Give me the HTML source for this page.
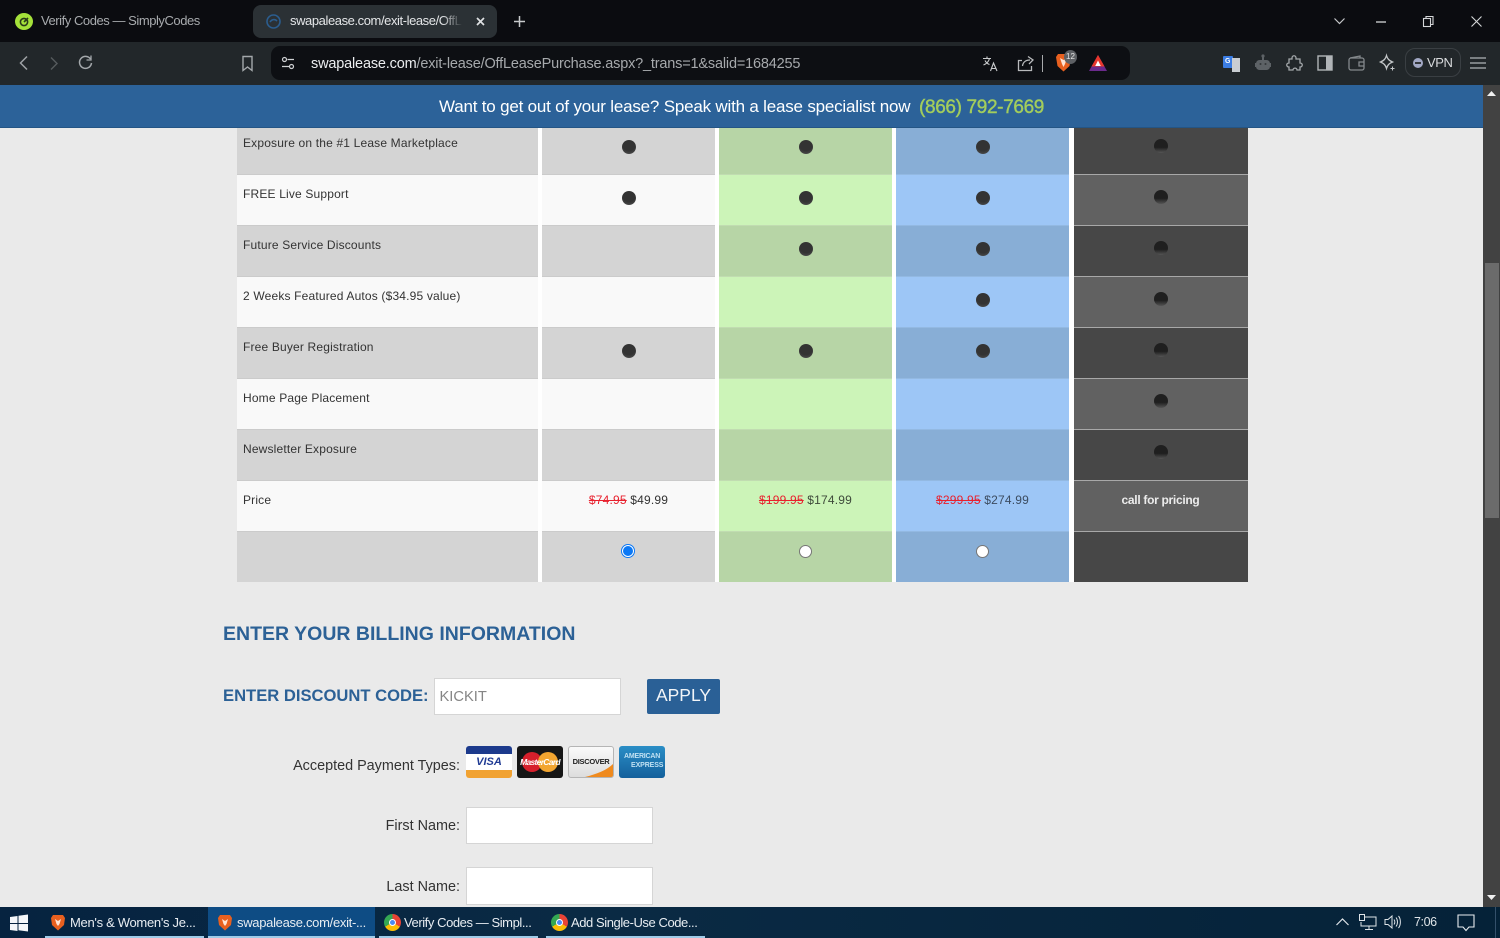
<!DOCTYPE html>
<html><head><meta charset="utf-8"><title>swapalease.com</title>
<style>
*{box-sizing:border-box}
html,body{margin:0;padding:0;width:1500px;height:938px;overflow:hidden;background:#eaeaea;font-family:"Liberation Sans",sans-serif}
.a{position:absolute;white-space:nowrap}
.r{position:absolute}
.t{position:absolute;white-space:nowrap;font-size:12px;color:#333;line-height:14px;left:243px;letter-spacing:.17px}
.d{position:absolute;width:14px;height:14px;border-radius:50%;background:radial-gradient(circle at 50% 30%,#333 55%,#555 100%)}
.dk{position:absolute;width:14px;height:14px;border-radius:50%;background:linear-gradient(#1f1f1f 60%,#555)}
.p{position:absolute;white-space:nowrap;font-size:12px;line-height:14px;top:493px;text-align:center;letter-spacing:.2px}
.p s{color:#e8212e}
.lb{position:absolute;white-space:nowrap;font-size:14.4px;color:#333;text-align:right;right:1040px;line-height:18px}
.in{position:absolute;background:#fff;border:1px solid #d5d5d5}
.tb{position:absolute;top:907px;height:31px;color:#e8edf2;font-size:13px;line-height:31px;white-space:nowrap;letter-spacing:-.43px}
.ul{position:absolute;top:936px;height:2px;background:#9ecbe8}
svg{position:absolute;overflow:visible}
.g1{left:542px;width:173px}.g2{left:719px;width:173px}.g3{left:896px;width:173px}.g4{left:1074px;width:174px}.g0{left:237px;width:301px}
.dg{background:#d4d4d4}.lg{background:#f9f9f9}.dn{background:#b7d5a6}.ln{background:#ccf4b8}.db{background:#88aed6}.lb2{background:#9dc6f6}.dd{background:#474747}.ld{background:#616161}
.c0{background:#cbcbcb}.c2{background:#c1dcb1}.c3{background:#93b9e2}.c4{background:#a8a8a8}
</style></head><body>

<!-- tab strip -->
<div class="r" style="left:0;top:0;width:1500px;height:42px;background:#0b0c10"></div>
<div class="r" style="left:15px;top:13px;width:18px;height:17px;border-radius:50%;background:#a5e23a"></div>
<svg style="left:15px;top:13px" width="18" height="17" fill="none" stroke="#2a3a1a" stroke-width="1.6"><circle cx="9" cy="9" r="3.6"/><path d="M9 9l4-4"/></svg>
<div class="a" style="left:41px;top:13px;font-size:13px;line-height:16px;color:#a8abae;letter-spacing:-.45px">Verify Codes — SimplyCodes</div>
<div class="r" style="left:253px;top:5px;width:244px;height:33px;border-radius:8px;background:#2b3135"></div>
<svg style="left:265px;top:13px" width="17" height="17" fill="none" stroke="#2b5d8f" stroke-width="1.6"><circle cx="8.5" cy="8.5" r="6.5"/><path d="M5 9c2-3 5-3 7-1"/></svg>
<div class="a" style="left:290px;top:13px;width:172px;overflow:hidden;font-size:13px;line-height:16px;color:#e4e6e8;letter-spacing:-.42px">swapalease.com/exit-lease/OffLease</div>
<div class="r" style="left:442px;top:10px;width:20px;height:24px;background:linear-gradient(90deg,rgba(43,49,53,0),#2b3135)"></div>
<svg style="left:476px;top:17px" width="9" height="9" stroke="#dfe1e3" stroke-width="1.7"><path d="M1 1l7 7M8 1l-7 7"/></svg>
<svg style="left:513px;top:15px" width="13" height="13" stroke="#c8cacc" stroke-width="1.5"><path d="M6.5 1v11M1 6.5h11"/></svg>
<svg style="left:1334px;top:18px" width="11" height="7" fill="none" stroke="#c5c7c9" stroke-width="1.2"><path d="M.5 .5l5 5 5-5"/></svg>
<svg style="left:1376px;top:21px" width="10" height="2" stroke="#d5d7d9" stroke-width="1.3"><path d="M0 1h10"/></svg>
<svg style="left:1423px;top:16px" width="11" height="11" fill="none" stroke="#d5d7d9" stroke-width="1.1"><rect x=".5" y="2.5" width="7" height="8"/><path d="M3 2.5V.5h7v8H7.5"/></svg>
<svg style="left:1471px;top:16px" width="11" height="11" stroke="#d5d7d9" stroke-width="1.1"><path d="M.5 .5l10 10M10.5 .5l-10 10"/></svg>

<!-- toolbar -->
<div class="r" style="left:0;top:42px;width:1500px;height:43px;background:#22272a"></div>
<svg style="left:18px;top:55px" width="11" height="16" fill="none" stroke="#9ea2a5" stroke-width="1.5"><path d="M9 1.5L2.5 8 9 14.5"/></svg>
<svg style="left:49px;top:56px" width="10" height="15" fill="none" stroke="#565b5e" stroke-width="1.4"><path d="M2 1.5L8 7.5 2 13.5"/></svg>
<svg style="left:77px;top:54px" width="17" height="17" fill="none" stroke="#a4a8ab" stroke-width="1.5"><path d="M13.5 5A6 6 0 1 0 14.5 9"/><path d="M14 1.5V6H9.5" stroke-width="1.3"/></svg>
<svg style="left:241px;top:55px" width="13" height="17" fill="none" stroke="#a4a8ab" stroke-width="1.4"><path d="M2 1.5h9v14l-4.5-3.5L2 15.5z"/></svg>
<div class="r" style="left:271px;top:46px;width:859px;height:34px;border-radius:9px;background:#0d0f13"></div>
<svg style="left:281px;top:56px" width="14" height="15" fill="none" stroke="#d0d2d4" stroke-width="1.2"><circle cx="3.5" cy="3.5" r="2"/><path d="M6.5 3.5H13M1 10.5h7"/><circle cx="10.5" cy="10.5" r="2"/></svg>
<div class="a" style="left:311px;top:55px;font-size:14.5px;line-height:18px;color:#a6a9ac;letter-spacing:-.18px"><span style="color:#eceef0">swapalease.com</span>/exit-lease/OffLeasePurchase.aspx?_trans=1&amp;salid=1684255</div>
<svg style="left:982px;top:56px" width="17" height="16" fill="none" stroke="#c9cbcd" stroke-width="1.1"><path d="M1 2.5h8M5 .5v2M7.5 2.5C6.5 6 4 8 1.5 9M3 4.5c1 2 3 3.5 4.500 4M8.500 15l3-8 3.500 8M9.700 12.500h4.500"/></svg>
<svg style="left:1017px;top:55px" width="18" height="17" fill="none" stroke="#b8babc" stroke-width="1.300"><path d="M5 5.500H1.500v10h13V11"/><path d="M5.500 11C6 7 9 5 13 5M11 1.500L16 5l-4 4"/></svg>
<div class="r" style="left:1042px;top:55px;width:1px;height:17px;background:#a8aaac"></div>
<svg style="left:1055px;top:53px" width="17" height="20"><path d="M3 1h11l2 3-1.500 9-6 5.500-6-5.500L1 4z" fill="#e8601f"/><path d="M5 5l3.500 2L12 5l-2 6-1.500 3L7 11z" fill="#ffe3d3"/></svg>
<div class="a" style="left:1064px;top:50px;width:13px;height:14px;border-radius:50%;background:#5d6064;color:#e6e6e6;font-size:8px;line-height:14px;text-align:center">12</div>
<svg style="left:1089px;top:55px" width="18" height="16"><path d="M9 0L18 16H0z" fill="#6a2a8c"/><path d="M9 0L15.500 11.500H2.500z" fill="#e8372c"/><path d="M9 5.500l2.800 5.500H6.200z" fill="#fff"/></svg>
<!-- extensions -->
<div class="r" style="left:1223px;top:56px;width:10px;height:12px;background:#3b7de4;border-radius:1px"></div>
<div class="r" style="left:1232px;top:58px;width:8px;height:14px;background:#c9cdd2"></div>
<div class="a" style="left:1225px;top:57px;font-size:7px;font-weight:bold;color:#fff;line-height:9px">G</div>
<svg style="left:1255px;top:54px" width="16" height="17" fill="#5d6266"><rect x="1" y="6" width="14" height="10" rx="3.500"/><rect x="7" y="2" width="2" height="4"/><circle cx="8" cy="2" r="1.600"/><rect x="0" y="9" width="1" height="4"/><rect x="15" y="9" width="1" height="4"/><circle cx="5.500" cy="10" r="1" fill="#33373a"/><circle cx="10.500" cy="10" r="1" fill="#33373a"/></svg>
<svg style="left:1286px;top:55px" width="17" height="17" fill="none" stroke="#a4a8ab" stroke-width="1.300"><path d="M6 3c0-3 4-3 4 0v1h4v4c3 0 3 4 0 4v3h-3c0-2.500-4-2.500-4 0H3v-3C0 12 0 8 3 8V4h3z"/></svg>
<svg style="left:1317px;top:55px" width="16" height="16"><rect x="1" y="1" width="14" height="14" fill="none" stroke="#b0b4b7" stroke-width="1.400"/><rect x="9" y="1" width="6" height="14" fill="#b0b4b7"/></svg>
<svg style="left:1348px;top:55px" width="17" height="16" fill="none" stroke="#84898c" stroke-width="1.300"><rect x="1" y="3" width="15" height="12" rx="2"/><path d="M2 3l10-2v2M16 7h-5v4h5"/></svg>
<svg style="left:1379px;top:54px" width="18" height="18" fill="none" stroke="#c4c7c9" stroke-width="1.300"><path d="M7.500 1.500c1 3.500 2.500 5 6 6.500-3.500 1.500-5 3-6 6.500-1-3.500-2.500-5-6-6.500 3.500-1.500 5-3 6-6.500z"/><path d="M13.500 12.500v4M11.500 14.500h4" stroke-width="1"/></svg>
<div class="r" style="left:1405px;top:48px;width:56px;height:29px;border-radius:10px;border:1px solid #3a3f43"></div>
<div class="r" style="left:1413px;top:58px;width:10px;height:10px;border-radius:50%;background:#a2a8c4"></div>
<div class="r" style="left:1415px;top:62px;width:6px;height:2px;background:#33363a"></div>
<div class="a" style="left:1427px;top:55px;font-size:13px;line-height:16px;color:#d8dadc;letter-spacing:-.4px">VPN</div>
<svg style="left:1470px;top:57px" width="16" height="12" stroke="#b0b4b7" stroke-width="1.300"><path d="M0 1h16M0 6h16M0 11h16"/></svg>

<!-- page -->
<div class="r" style="left:0;top:85px;width:1483px;height:822px;background:#eaeaea"></div>
<div class="r" style="left:237px;top:127px;width:1011px;height:455px;background:#fff"></div>

<!-- rows -->
<div class="r g0 dg" style="top:127px;height:48px"></div><div class="r g1 dg" style="top:127px;height:48px"></div><div class="r g2 dn" style="top:127px;height:48px"></div><div class="r g3 db" style="top:127px;height:48px"></div><div class="r g4 dd" style="top:127px;height:48px"></div>
<div class="r g0 lg" style="top:175px;height:51px"></div><div class="r g1 lg" style="top:175px;height:51px"></div><div class="r g2 ln" style="top:175px;height:51px"></div><div class="r g3 lb2" style="top:175px;height:51px"></div><div class="r g4 ld" style="top:175px;height:51px"></div>
<div class="r g0 dg" style="top:226px;height:51px"></div><div class="r g1 dg" style="top:226px;height:51px"></div><div class="r g2 dn" style="top:226px;height:51px"></div><div class="r g3 db" style="top:226px;height:51px"></div><div class="r g4 dd" style="top:226px;height:51px"></div>
<div class="r g0 lg" style="top:277px;height:51px"></div><div class="r g1 lg" style="top:277px;height:51px"></div><div class="r g2 ln" style="top:277px;height:51px"></div><div class="r g3 lb2" style="top:277px;height:51px"></div><div class="r g4 ld" style="top:277px;height:51px"></div>
<div class="r g0 dg" style="top:328px;height:51px"></div><div class="r g1 dg" style="top:328px;height:51px"></div><div class="r g2 dn" style="top:328px;height:51px"></div><div class="r g3 db" style="top:328px;height:51px"></div><div class="r g4 dd" style="top:328px;height:51px"></div>
<div class="r g0 lg" style="top:379px;height:51px"></div><div class="r g1 lg" style="top:379px;height:51px"></div><div class="r g2 ln" style="top:379px;height:51px"></div><div class="r g3 lb2" style="top:379px;height:51px"></div><div class="r g4 ld" style="top:379px;height:51px"></div>
<div class="r g0 dg" style="top:430px;height:51px"></div><div class="r g1 dg" style="top:430px;height:51px"></div><div class="r g2 dn" style="top:430px;height:51px"></div><div class="r g3 db" style="top:430px;height:51px"></div><div class="r g4 dd" style="top:430px;height:51px"></div>
<div class="r g0 lg" style="top:481px;height:51px"></div><div class="r g1 lg" style="top:481px;height:51px"></div><div class="r g2 ln" style="top:481px;height:51px"></div><div class="r g3 lb2" style="top:481px;height:51px"></div><div class="r g4 ld" style="top:481px;height:51px"></div>
<div class="r g0 dg" style="top:532px;height:50px"></div><div class="r g1 dg" style="top:532px;height:50px"></div><div class="r g2 dn" style="top:532px;height:50px"></div><div class="r g3 db" style="top:532px;height:50px"></div><div class="r g4 dd" style="top:532px;height:50px"></div>

<!-- horizontal rules -->
<div class="r g0 c0" style="top:174px;height:1px"></div><div class="r g1 c0" style="top:174px;height:1px"></div><div class="r g2 c2" style="top:174px;height:1px"></div><div class="r g3 c3" style="top:174px;height:1px"></div><div class="r g4 c4" style="top:174px;height:1px"></div>
<div class="r g0 c0" style="top:225px;height:1px"></div><div class="r g1 c0" style="top:225px;height:1px"></div><div class="r g2 c2" style="top:225px;height:1px"></div><div class="r g3 c3" style="top:225px;height:1px"></div><div class="r g4 c4" style="top:225px;height:1px"></div>
<div class="r g0 c0" style="top:276px;height:1px"></div><div class="r g1 c0" style="top:276px;height:1px"></div><div class="r g2 c2" style="top:276px;height:1px"></div><div class="r g3 c3" style="top:276px;height:1px"></div><div class="r g4 c4" style="top:276px;height:1px"></div>
<div class="r g0 c0" style="top:327px;height:1px"></div><div class="r g1 c0" style="top:327px;height:1px"></div><div class="r g2 c2" style="top:327px;height:1px"></div><div class="r g3 c3" style="top:327px;height:1px"></div><div class="r g4 c4" style="top:327px;height:1px"></div>
<div class="r g0 c0" style="top:378px;height:1px"></div><div class="r g1 c0" style="top:378px;height:1px"></div><div class="r g2 c2" style="top:378px;height:1px"></div><div class="r g3 c3" style="top:378px;height:1px"></div><div class="r g4 c4" style="top:378px;height:1px"></div>
<div class="r g0 c0" style="top:429px;height:1px"></div><div class="r g1 c0" style="top:429px;height:1px"></div><div class="r g2 c2" style="top:429px;height:1px"></div><div class="r g3 c3" style="top:429px;height:1px"></div><div class="r g4 c4" style="top:429px;height:1px"></div>
<div class="r g0 c0" style="top:480px;height:1px"></div><div class="r g1 c0" style="top:480px;height:1px"></div><div class="r g2 c2" style="top:480px;height:1px"></div><div class="r g3 c3" style="top:480px;height:1px"></div><div class="r g4 c4" style="top:480px;height:1px"></div>
<div class="r g0 c0" style="top:531px;height:1px"></div><div class="r g1 c0" style="top:531px;height:1px"></div><div class="r g2 c2" style="top:531px;height:1px"></div><div class="r g3 c3" style="top:531px;height:1px"></div><div class="r g4 c4" style="top:531px;height:1px"></div>

<!-- labels -->
<div class="t" style="top:136px">Exposure on the #1 Lease Marketplace</div>
<div class="t" style="top:187px">FREE Live Support</div>
<div class="t" style="top:238px">Future Service Discounts</div>
<div class="t" style="top:289px">2 Weeks Featured Autos ($34.95 value)</div>
<div class="t" style="top:340px">Free Buyer Registration</div>
<div class="t" style="top:391px">Home Page Placement</div>
<div class="t" style="top:442px">Newsletter Exposure</div>
<div class="t" style="top:493px">Price</div>

<!-- dots -->
<div class="d" style="left:622px;top:140px"></div><div class="d" style="left:799px;top:140px"></div><div class="d" style="left:976px;top:140px"></div><div class="dk" style="left:1154px;top:139px"></div>
<div class="d" style="left:622px;top:191px"></div><div class="d" style="left:799px;top:191px"></div><div class="d" style="left:976px;top:191px"></div><div class="dk" style="left:1154px;top:190px"></div>
<div class="d" style="left:799px;top:242px"></div><div class="d" style="left:976px;top:242px"></div><div class="dk" style="left:1154px;top:241px"></div>
<div class="d" style="left:976px;top:293px"></div><div class="dk" style="left:1154px;top:292px"></div>
<div class="d" style="left:622px;top:344px"></div><div class="d" style="left:799px;top:344px"></div><div class="d" style="left:976px;top:344px"></div><div class="dk" style="left:1154px;top:343px"></div>
<div class="dk" style="left:1154px;top:394px"></div>
<div class="dk" style="left:1154px;top:445px"></div>

<!-- prices -->
<div class="p" style="left:542px;width:173px;color:#333"><s>$74.95</s> $49.99</div>
<div class="p" style="left:672px;width:267px;color:#3e4a3a"><s>$199.95</s> $174.99</div>
<div class="p" style="left:849px;width:267px;color:#3c4c60"><s>$299.95</s> $274.99</div>
<div class="p" style="left:1074px;width:173px;color:#ececec;font-weight:bold;letter-spacing:-.3px">call for pricing</div>

<!-- radios -->
<div class="r" style="left:621px;top:544px;width:14px;height:14px;border-radius:50%;background:#fff;border:1px solid #0b78f5"></div>
<div class="r" style="left:623px;top:546px;width:10px;height:10px;border-radius:50%;background:#0b78f5"></div>
<div class="r" style="left:799px;top:545px;width:13px;height:13px;border-radius:50%;background:#fff;border:1px solid #767676"></div>
<div class="r" style="left:976px;top:545px;width:13px;height:13px;border-radius:50%;background:#fff;border:1px solid #767676"></div>

<!-- billing -->
<div class="a" style="left:223px;top:622px;font-size:19.5px;line-height:24px;font-weight:bold;color:#2c6196">ENTER YOUR BILLING INFORMATION</div>
<div class="a" style="left:223px;top:685px;font-size:16.6px;line-height:22px;font-weight:bold;color:#2c6196">ENTER DISCOUNT CODE:</div>
<div class="in" style="left:434px;top:678px;width:187px;height:37px"></div>
<div class="a" style="left:439.500px;top:688px;font-size:14.700px;line-height:18px;color:#858585">KICKIT</div>
<div class="r" style="left:647px;top:679px;width:73px;height:35px;border-radius:2px;background:#2a6096"></div>
<div class="a" style="left:647px;top:685px;width:73px;text-align:center;font-size:17.5px;line-height:21px;color:#f2f5f8">APPLY</div>

<div class="lb" style="top:757px">Accepted Payment Types:</div>
<div class="lb" style="top:817px">First Name:</div>
<div class="lb" style="top:878px">Last Name:</div>
<div class="in" style="left:466px;top:807px;width:187px;height:37px"></div>
<div class="in" style="left:466px;top:867px;width:187px;height:38px"></div>

<!-- cards -->
<div class="r" style="left:466px;top:746px;width:46px;height:32px;border-radius:3px;overflow:hidden;background:#fff"><div style="height:8px;background:#1c3a8c"></div><div style="position:absolute;left:0;top:24px;width:46px;height:8px;background:#f1a232"></div><div style="position:absolute;left:0;top:9px;width:46px;text-align:center;font:italic bold 11px/14px 'Liberation Sans',sans-serif;color:#1f3a93">VISA</div></div>
<div class="r" style="left:517px;top:746px;width:46px;height:32px;border-radius:3px;overflow:hidden;background:#161616"><div style="position:absolute;left:5px;top:6px;width:20px;height:20px;border-radius:50%;background:#d7202c"></div><div style="position:absolute;left:21px;top:6px;width:20px;height:20px;border-radius:50%;background:#f2a530"></div><div style="position:absolute;left:0;top:9px;width:46px;text-align:center;font:italic bold 8.5px/14px 'Liberation Sans',sans-serif;letter-spacing:-.7px;color:#fff">MasterCard</div></div>
<div class="r" style="left:568px;top:746px;width:46px;height:32px;border-radius:3px;overflow:hidden;background:linear-gradient(#fafafa,#ddd);border:1px solid #b5b5b5"><svg style="left:0;top:0" width="44" height="30"><path d="M16 30C28 27 38 23 44 17v13z" fill="#ef8a1e"/></svg><div style="position:absolute;left:0;top:8px;width:44px;text-align:center;font:bold 7.5px/14px 'Liberation Sans',sans-serif;letter-spacing:-.3px;color:#222">DISCOVER</div></div>
<div class="r" style="left:619px;top:746px;width:46px;height:32px;border-radius:3px;overflow:hidden;background:linear-gradient(#2a8ec6,#14609c)"><div style="position:absolute;left:5px;top:6px;font:bold 7px/9px 'Liberation Sans',sans-serif;letter-spacing:-.2px;color:#bfe0f2">AMERICAN</div><div style="position:absolute;left:12px;top:15px;font:bold 7px/9px 'Liberation Sans',sans-serif;letter-spacing:-.1px;color:#bfe0f2">EXPRESS</div></div>

<!-- sticky banner -->
<div class="r" style="left:0;top:85px;width:1483px;height:43px;background:#2c6299;border-bottom:1px solid #245585"></div>
<div class="a" style="left:439px;top:97px;font-size:17px;line-height:20px;color:#fff;letter-spacing:-.2px">Want to get out of your lease? Speak with a lease specialist now</div>
<div class="a" style="left:919px;top:96px;font-size:19px;line-height:23px;color:#a3cd5c;letter-spacing:-.35px;-webkit-text-stroke:.4px #a3cd5c">(866) 792-7669</div>

<!-- scrollbar -->
<div class="r" style="left:1483px;top:85px;width:17px;height:822px;background:#424242"></div>
<div class="r" style="left:1485px;top:263px;width:14px;height:255px;background:#6b6b6b"></div>
<svg style="left:1487px;top:91px" width="9" height="6" fill="#f0f0f0"><path d="M4.500 0L9 5H0z"/></svg>
<svg style="left:1487px;top:895px" width="9" height="6" fill="#f0f0f0"><path d="M0 0h9L4.500 5z"/></svg>

<!-- taskbar -->
<div class="r" style="left:0;top:907px;width:1500px;height:31px;background:linear-gradient(90deg,#062340,#0a2a44 40%,#052238)"></div>
<div class="r" style="left:208px;top:907px;width:167px;height:31px;background:#0e4c84"></div>
<svg style="left:10px;top:914px" width="19" height="18" fill="#f4f7fa"><path d="M0 3l7.500-1v7H0zM8.500 1.800L18 .5V9H8.500zM0 10h7.500v7L0 16zM8.500 10H18v7.500l-9.500-1.300z"/></svg>
<div class="ul" style="left:45px;width:159px"></div>
<div class="ul" style="left:208px;width:167px"></div>
<div class="ul" style="left:379px;width:159px"></div>
<div class="ul" style="left:546px;width:159px"></div>
<svg style="left:51px;top:914px" width="14" height="17"><path d="M2 1h10l2 3-1 7-6 5.500-6-5.500L0 4z" fill="#e8601f"/><path d="M4 5l3 2 3-2-1.500 5L7 12 5.500 10z" fill="#ffe3d3"/></svg>
<div class="tb" style="left:70px;letter-spacing:-.3px">Men's &amp; Women's Je...</div>
<svg style="left:218px;top:914px" width="14" height="17"><path d="M2 1h10l2 3-1 7-6 5.500-6-5.500L0 4z" fill="#e8601f"/><path d="M4 5l3 2 3-2-1.500 5L7 12 5.500 10z" fill="#ffe3d3"/></svg>
<div class="tb" style="left:237px;letter-spacing:-.3px">swapalease.com/exit-...</div>
<div class="r" style="left:384px;top:914px;width:17px;height:17px;border-radius:50%;background:conic-gradient(#ea4335 0 120deg,#fbbc05 120deg 240deg,#34a853 240deg)"></div><div class="r" style="left:389px;top:919px;width:7px;height:7px;border-radius:50%;background:#4a8af4;border:1px solid #fff"></div>
<div class="tb" style="left:404px">Verify Codes — Simpl...</div>
<div class="r" style="left:551px;top:914px;width:17px;height:17px;border-radius:50%;background:conic-gradient(#ea4335 0 120deg,#fbbc05 120deg 240deg,#34a853 240deg)"></div><div class="r" style="left:556px;top:919px;width:7px;height:7px;border-radius:50%;background:#4a8af4;border:1px solid #fff"></div>
<div class="tb" style="left:571px">Add Single-Use Code...</div>

<svg style="left:1336px;top:918px" width="13" height="8" fill="none" stroke="#dfe4e8" stroke-width="1.200"><path d="M.5 7L6.500 1l6 6"/></svg>
<svg style="left:1359px;top:914px" width="18" height="17" fill="none" stroke="#dfe4e8" stroke-width="1"><path d="M5 3h12v9H2V8"/><path d="M10 12v3M6 15.500h8"/><rect x=".5" y=".5" width="5" height="6"/></svg>
<svg style="left:1384px;top:914px" width="17" height="16" fill="none" stroke="#dfe4e8" stroke-width="1"><path d="M1 5.500h3L8 2v12l-4-3.500H1z"/><path d="M10 5.500c1 1.500 1 3.500 0 5M12 3.500c2 2.500 2 6.500 0 9M14.500 2c2.500 3 2.500 9 0 12"/></svg>
<div class="a" style="left:1414px;top:914px;font-size:12.5px;line-height:16px;color:#dfe4e8;letter-spacing:-.4px">7:06</div>
<svg style="left:1457px;top:914px" width="18" height="18" fill="none" stroke="#e8ecef" stroke-width="1.100"><path d="M1 1h16v12h-5l-3 3.500L6 13H1z"/></svg>
<div class="r" style="left:1495px;top:907px;width:1px;height:31px;background:#34506a"></div>
</body></html>
